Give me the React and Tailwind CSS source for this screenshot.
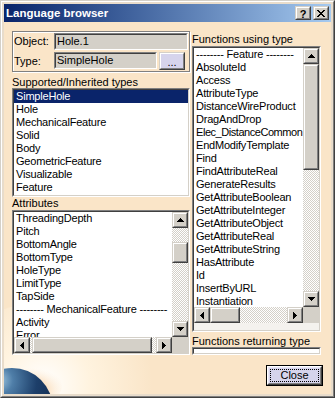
import React from "react";

const Up = () => (
  <svg width="7" height="4" viewBox="0 0 7 4" shapeRendering="crispEdges">
    <path d="M3 0h1v1H3zM2 1h3v1H2zM1 2h5v1H1zM0 3h7v1H0z" fill="#000" />
  </svg>
);
const Down = () => (
  <svg width="7" height="4" viewBox="0 0 7 4" shapeRendering="crispEdges">
    <path d="M0 0h7v1H0zM1 1h5v1H1zM2 2h3v1H2zM3 3h1v1H3z" fill="#000" />
  </svg>
);
const Left = () => (
  <svg width="4" height="7" viewBox="0 0 4 7" shapeRendering="crispEdges">
    <path d="M3 0h1v7H3zM2 1h1v5H2zM1 2h1v3H1zM0 3h1v1H0z" fill="#000" />
  </svg>
);
const Right = () => (
  <svg width="4" height="7" viewBox="0 0 4 7" shapeRendering="crispEdges">
    <path d="M0 0h1v7H0zM1 1h1v5H1zM2 2h1v3H2zM3 3h1v1H3z" fill="#000" />
  </svg>
);

function Raised({ className = "", face = "bg-[#d4d0c8]", children }) {
  return (
    <div
      className={`shrink-0 border border-t-[#d4d0c8] border-l-[#d4d0c8] border-r-[#404040] border-b-[#404040] ${className}`}
    >
      <div
        className={`w-full h-full border border-t-white border-l-white border-r-[#808080] border-b-[#808080] flex items-center justify-center ${face}`}
      >
        {children}
      </div>
    </div>
  );
}

function Sunken({ className = "", inner = "bg-white", children }) {
  return (
    <div
      className={`shrink-0 border border-t-[#808080] border-l-[#808080] border-b-white border-r-white ${className}`}
    >
      <div
        className={`w-full h-full border border-t-[#404040] border-l-[#404040] border-b-[#d4d0c8] border-r-[#d4d0c8] overflow-hidden ${inner}`}
      >
        {children}
      </div>
    </div>
  );
}

const dither =
  "bg-[image:repeating-conic-gradient(#d4d0c8_0%_25%,#ffffff_0%_50%)] bg-[length:2px_2px]";

function Row({ children, selected, tight }) {
  return (
    <div
      className={`h-[13px] leading-[13px] pl-[2px] whitespace-nowrap ${
        tight ? "tracking-[-0.45px]" : "tracking-[-0.2px]"
      } ${selected ? "bg-[#0a246a] text-white" : "text-black"}`}
    >
      {children}
    </div>
  );
}

const supported = [
  "SimpleHole",
  "Hole",
  "MechanicalFeature",
  "Solid",
  "Body",
  "GeometricFeature",
  "Visualizable",
  "Feature",
];

const attributes = [
  "ThreadingDepth",
  "Pitch",
  "BottomAngle",
  "BottomType",
  "HoleType",
  "LimitType",
  "TapSide",
  "-------- MechanicalFeature --------",
  "Activity",
  "Error",
];

const functions = [
  "-------- Feature --------",
  "AbsoluteId",
  "Access",
  "AttributeType",
  "DistanceWireProduct",
  "DragAndDrop",
  "Elec_DistanceCommon",
  "EndModifyTemplate",
  "Find",
  "FindAttributeReal",
  "GenerateResults",
  "GetAttributeBoolean",
  "GetAttributeInteger",
  "GetAttributeObject",
  "GetAttributeReal",
  "GetAttributeString",
  "HasAttribute",
  "Id",
  "InsertByURL",
  "Instantiation",
];

export default function App() {
  return (
    <div className="w-[335px] h-[398px] font-['Liberation_Sans',Arial,sans-serif] text-[11px] text-black border border-t-[#d4d0c8] border-l-[#d4d0c8] border-r-[#404040] border-b-[#404040]">
      <div className="w-full h-full border border-t-white border-l-white border-r-[#808080] border-b-[#808080] bg-[#e8dccb] p-[2px] flex flex-col">
        {/* Title bar */}
        <div className="h-[18px] shrink-0 flex items-center bg-gradient-to-r from-[#0a246a] to-[#a6caf0] pl-[2px] pr-[2px]">
          <div className="flex-1 text-white font-bold text-[11.5px] leading-[18px] whitespace-nowrap">
            Language browser
          </div>
          <Raised className="w-[16px] h-[14px]">
            <span className="font-bold text-[11px] leading-[10px] mt-[1px]">?</span>
          </Raised>
          <Raised className="w-[16px] h-[14px] ml-[2px]">
            <svg width="8" height="7" viewBox="0 0 8 7" shapeRendering="crispEdges">
              <path
                d="M0 0h2v1H0zM6 0h2v1H6zM1 1h2v1H1zM5 1h2v1H5zM2 2h4v1H2zM3 3h2v1H3zM2 4h4v1H2zM1 5h2v1H1zM5 5h2v1H5zM0 6h2v1H0zM6 6h2v1H6z"
                fill="#000"
              />
            </svg>
          </Raised>
        </div>

        {/* Body */}
        <div className="relative flex-1 overflow-hidden bg-[#fae5c8]">
          <div className="absolute left-[-60px] bottom-[-90px] w-[220px] h-[180px] rounded-full bg-[radial-gradient(circle_at_45%_45%,#ffffff_0%,#fff3df_30%,rgba(250,229,200,0)_70%)]" />
          <svg
            className="absolute left-0 bottom-0"
            width="70"
            height="30"
            viewBox="0 0 70 30"
          >
            <defs>
              <radialGradient id="glow" cx="0.45" cy="0.6" r="0.6">
                <stop offset="0" stopColor="#f7a850" stopOpacity="0.9" />
                <stop offset="1" stopColor="#fae5c8" stopOpacity="0" />
              </radialGradient>
              <radialGradient id="planet" cx="0.35" cy="0.15" r="0.9">
                <stop offset="0" stopColor="#9cc4df" />
                <stop offset="0.18" stopColor="#4f7ea8" />
                <stop offset="0.5" stopColor="#1d3f6a" />
                <stop offset="1" stopColor="#0d2140" />
              </radialGradient>
            </defs>
            <ellipse cx="30" cy="22" rx="28" ry="18" fill="url(#glow)" />
            <circle cx="8" cy="45" r="41" fill="url(#planet)" />
          </svg>

          <div className="relative flex items-start gap-[2px] pl-[8px] pt-[9px]">
            {/* Left column */}
            <div className="w-[178px] flex flex-col">
              <div className="h-[41px] border border-[#808080] shadow-[inset_1px_1px_0_#fff,1px_1px_0_#fff] pt-[1px] pl-[1px] pr-[1px] flex flex-col gap-[2px]">
                <div className="h-[17px] flex items-center">
                  <div className="w-[40px] leading-[13px]">Object:</div>
                  <Sunken className="flex-1 h-[17px]" inner="bg-[#d4d0c8]">
                    <div className="leading-[13px] pl-[1px]">Hole.1</div>
                  </Sunken>
                </div>
                <div className="h-[18px] flex items-center">
                  <div className="w-[40px] leading-[13px]">Type:</div>
                  <Sunken className="w-[103px] h-[17px] self-start" inner="bg-[#d4d0c8]">
                    <div className="leading-[13px] pl-[1px]">SimpleHole</div>
                  </Sunken>
                  <Raised className="w-[26px] h-[18px] ml-[2px]" face="bg-[#d6d4ec]">
                    <span className="leading-[10px] mt-[2px]">...</span>
                  </Raised>
                </div>
              </div>

              <div className="mt-[4px] h-[12px] leading-[12px] whitespace-nowrap">
                Supported/Inherited types
              </div>
              <Sunken className="h-[109px]">
                <div>
                  {supported.map((s, i) => (
                    <Row key={s} selected={i === 0}>
                      {s}
                    </Row>
                  ))}
                </div>
              </Sunken>

              <div className="h-[13px] leading-[13px] whitespace-nowrap">Attributes</div>
              <Sunken className="h-[145px]">
                <div className="grid grid-cols-[158px_16px] grid-rows-[125px_16px] h-full">
                  <div className="overflow-hidden">
                    {attributes.map((s) => (
                      <Row key={s}>{s}</Row>
                    ))}
                  </div>
                  <div className="flex flex-col">
                    <Raised className="w-[16px] h-[16px]">
                      <Up />
                    </Raised>
                    <div className={`flex-1 ${dither}`}>
                      <Raised className="w-[16px] h-[21px] mt-[14px]" />
                    </div>
                    <Raised className="w-[16px] h-[16px]">
                      <Down />
                    </Raised>
                  </div>
                  <div className="flex">
                    <Raised className="w-[16px] h-[16px]">
                      <Left />
                    </Raised>
                    <div className={`flex-1 ${dither}`}>
                      <Raised className="w-[120px] h-[16px] ml-[2px]" />
                    </div>
                    <Raised className="w-[16px] h-[16px]">
                      <Right />
                    </Raised>
                  </div>
                  <div className="bg-[#d4d0c8]" />
                </div>
              </Sunken>
            </div>

            {/* Right column */}
            <div className="w-[129px] flex flex-col pt-[2px]">
              <div className="h-[13px] leading-[13px] whitespace-nowrap">Functions using type</div>
              <Sunken className="h-[286px]" inner="bg-[#f4f2ee]">
                <div className="grid grid-cols-[109px_16px] grid-rows-[259px_16px] bg-white">
                  <div className="overflow-hidden">
                    {functions.map((s) => (
                      <Row key={s} tight={s === "Elec_DistanceCommon"}>
                        {s}
                      </Row>
                    ))}
                  </div>
                  <div className="flex flex-col">
                    <Raised className="w-[16px] h-[16px]">
                      <Up />
                    </Raised>
                    <div className={`flex-1 ${dither}`}>
                      <Raised className="w-[16px] h-[106px]" />
                    </div>
                    <Raised className="w-[16px] h-[16px]">
                      <Down />
                    </Raised>
                  </div>
                  <div className="flex">
                    <Raised className="w-[16px] h-[16px]">
                      <Left />
                    </Raised>
                    <div className={`flex-1 ${dither}`}>
                      <Raised className="w-[30px] h-[16px]" />
                    </div>
                    <Raised className="w-[16px] h-[16px]">
                      <Right />
                    </Raised>
                  </div>
                  <div className="bg-[#d4d0c8]" />
                </div>
              </Sunken>
              <div className="mt-[3px] h-[12px] leading-[12px] whitespace-nowrap">
                Functions returning type
              </div>
              <Sunken className="h-[8px]" />
            </div>
          </div>

          {/* Close */}
          <div className="relative flex justify-end pr-[8px] mt-[10px]">
            <div className="w-[57px] h-[21px] border border-black">
              <div className="w-full h-full border border-t-white border-l-white border-r-[#404040] border-b-[#404040]">
                <div className="w-full h-full border border-t-[#e8e6f6] border-l-[#e8e6f6] border-r-[#808080] border-b-[#808080] bg-[#d6d4ec] p-[1px]">
                  <div className="w-full h-full border border-dotted border-black flex items-center justify-center leading-[13px]">
                    Close
                  </div>
                </div>
              </div>
            </div>
          </div>
        </div>
      </div>
    </div>
  );
}
